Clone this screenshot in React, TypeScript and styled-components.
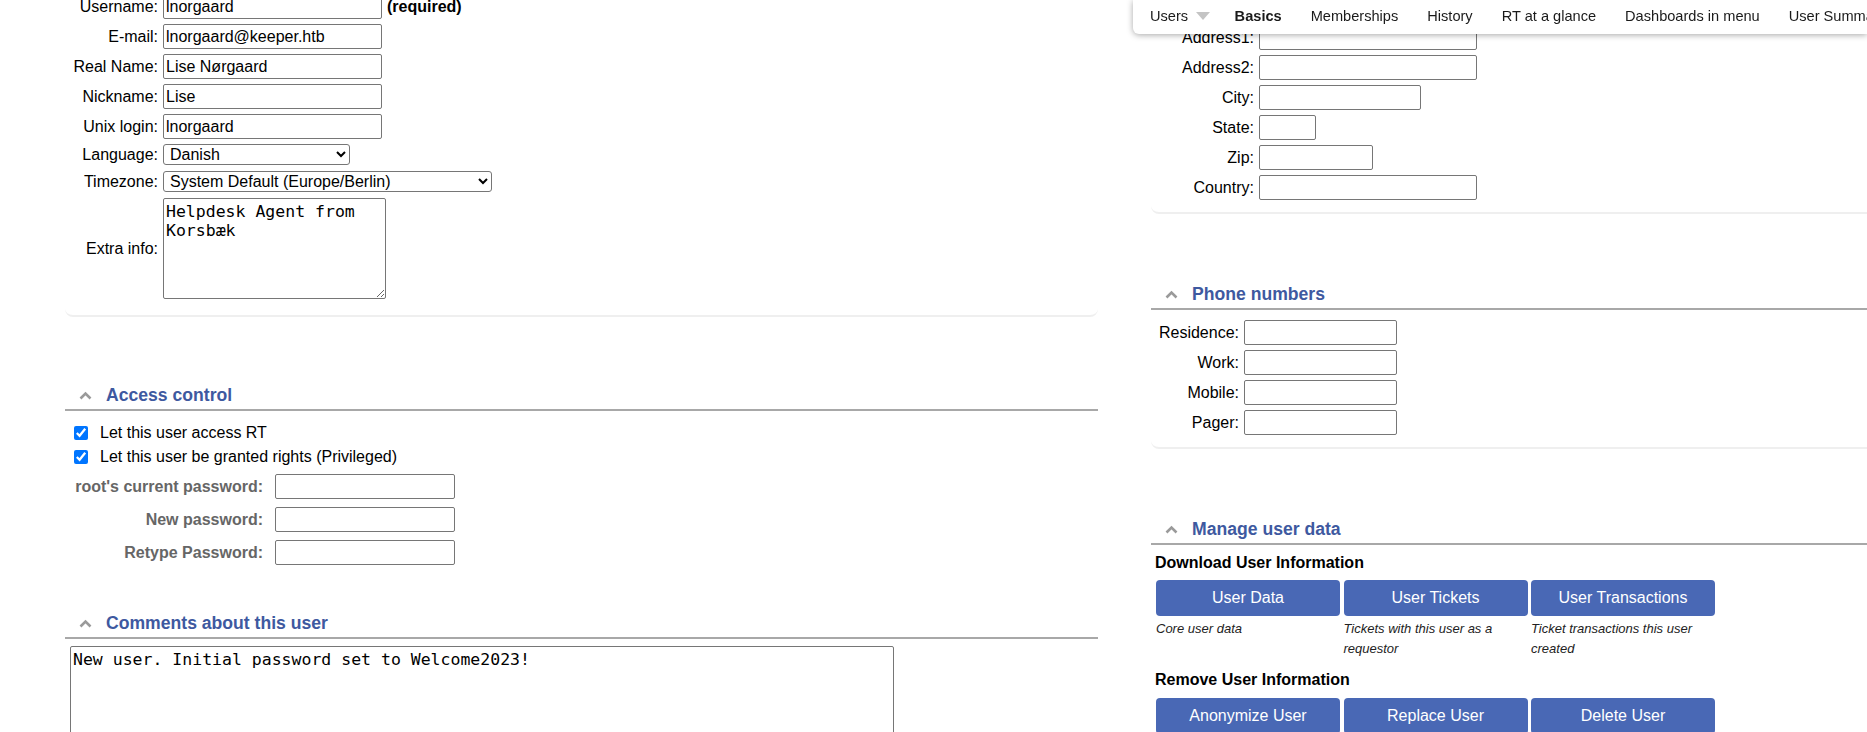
import React from 'react';
import styled, { createGlobalStyle, css } from 'styled-components';

const GlobalStyle = createGlobalStyle`
  html, body {
    margin: 0;
    padding: 0;
    overflow: hidden;
    background: #fff;
  }
  body {
    font-family: "Liberation Sans", Arial, sans-serif;
    font-size: 16px;
    color: #000;
  }
`;

const Page = styled.div`
  display: flex;
  align-items: flex-start;
  gap: 53px;
  width: max-content;
  padding-left: 65px;
  margin-top: -6px;
`;

const Column = styled.div`
  flex: none;
  width: 1033px;
`;

const Panel = styled.section<{ $gap?: number }>`
  margin-top: ${p => p.$gap ?? 0}px;
`;

const PanelHead = styled.div`
  display: flex;
  align-items: center;
  gap: 14px;
  height: 22px;
  padding: 0 0 3px 14px;
  border-bottom: 2px solid #a8a8a8;
`;

const PanelTitle = styled.h2`
  margin: 0;
  font-size: 17.6px;
  line-height: 22px;
  font-weight: bold;
  color: #3e59a0;
`;

const PanelBody = styled.div<{ $pt?: number; $pb?: number; $pl?: number; $framed?: boolean }>`
  padding: ${p => p.$pt ?? 0}px 0 ${p => p.$pb ?? 0}px ${p => p.$pl ?? 0}px;
  ${p =>
    p.$framed &&
    css`
      border-bottom: 2px solid #efefef;
      border-radius: 0 0 8px 8px;
    `}
`;

const FormGrid = styled.div<{ $label: number; $rowGap?: number; $labelGap?: number }>`
  display: grid;
  grid-template-columns: ${p => p.$label}px auto;
  row-gap: ${p => p.$rowGap ?? 5}px;
  align-items: center;
  justify-items: start;

  & > label {
    padding-right: ${p => p.$labelGap ?? 5}px;
  }
`;

const FieldLabel = styled.label<{ $muted?: boolean }>`
  justify-self: end;
  text-align: right;
  white-space: nowrap;
  ${p =>
    p.$muted &&
    css`
      font-weight: bold;
      color: #666;
    `}
`;

const FieldValue = styled.div`
  display: flex;
  align-items: center;
  gap: 5px;
`;

const TextInput = styled.input<{ $w: number }>`
  box-sizing: border-box;
  width: ${p => p.$w}px;
  height: 25px;
  margin: 0;
  padding: 1px 2px;
  border: 1px solid #767676;
  border-radius: 2px;
  background: #fff;
  color: #000;
  font: 16px "Liberation Sans", Arial, sans-serif;
`;

const Select = styled.select<{ $w: number }>`
  box-sizing: border-box;
  width: ${p => p.$w}px;
  height: 21px;
  margin: 0 0 1px;
  padding: 0 2px;
  border: 1px solid #767676;
  border-radius: 3px;
  background: #fff;
  color: #000;
  font: 16px "Liberation Sans", Arial, sans-serif;
`;

const TextArea = styled.textarea<{ $w: number; $h: number }>`
  display: block;
  box-sizing: border-box;
  width: ${p => p.$w}px;
  height: ${p => p.$h}px;
  margin: 0;
  padding: 3px 2px;
  border: 1px solid #767676;
  border-radius: 2px;
  color: #000;
  font: 16.5px "DejaVu Sans Mono", "Liberation Mono", monospace;
  line-height: 19px;
`;

const Required = styled.span`
  font-weight: bold;
`;

const CheckRow = styled.label`
  display: flex;
  align-items: center;
  gap: 12px;
  height: 24px;
  padding-left: 9px;
`;

const Check = styled.input.attrs({ type: 'checkbox' })`
  width: 14px;
  height: 14px;
  margin: 0;
  accent-color: #0075ff;
`;

const SubHeading = styled.div<{ $gap?: number }>`
  margin-top: ${p => p.$gap ?? 0}px;
  padding-left: 4px;
  font-weight: bold;
  line-height: 18px;
`;

const ButtonGrid = styled.div<{ $gap?: number }>`
  display: grid;
  grid-template-columns: repeat(3, 184px);
  column-gap: 3.5px;
  margin-top: ${p => p.$gap ?? 0}px;
  padding-left: 5px;
`;

const ActionButton = styled.button`
  height: 36px;
  border: none;
  border-radius: 4px;
  background: #4968b5;
  color: #fff;
  font: 16px "Liberation Sans", Arial, sans-serif;
  cursor: pointer;
`;

const Hint = styled.div`
  padding-top: 3px;
  font-size: 13px;
  font-style: italic;
  line-height: 20px;
  color: #222;
`;

const TopNav = styled.nav`
  position: fixed;
  top: 0;
  left: 1133px;
  right: 0;
  z-index: 10;
  display: flex;
  align-items: center;
  height: 34px;
  padding: 0 0 2px 2.5px;
  box-sizing: border-box;
  background: #fff;
  border-bottom-left-radius: 6px;
  box-shadow: 0 1px 6px rgba(0, 0, 0, 0.35);
  white-space: nowrap;
  overflow: hidden;
`;

const NavItem = styled.a<{ $active?: boolean }>`
  display: flex;
  align-items: center;
  gap: 8px;
  padding: 0 14.5px;
  font-size: 14.6px;
  font-weight: ${p => (p.$active ? 'bold' : 'normal')};
  color: #1a1a1a;
  text-decoration: none;
`;

const Caret = styled.svg`
  margin-right: -4.5px;
`;

const Chevron = () => (
  <svg width="13" height="9" viewBox="0 0 13 9">
    <polyline points="1.5,7.5 6.5,2.5 11.5,7.5" fill="none" stroke="#9a9a9a" strokeWidth="2.6" />
  </svg>
);

const Box = ({ title, gap, children }: { title: string; gap?: number; children: React.ReactNode }) => (
  <Panel $gap={gap}>
    <PanelHead>
      <Chevron />
      <PanelTitle>{title}</PanelTitle>
    </PanelHead>
    {children}
  </Panel>
);

const location: [string, number][] = [
  ['Address1', 218],
  ['Address2', 218],
  ['City', 162],
  ['State', 57],
  ['Zip', 114],
  ['Country', 218],
];

const phones = ['Residence', 'Work', 'Mobile', 'Pager'];

const passwords = ["root's current password", 'New password', 'Retype Password'];

const navItems = ['Basics', 'Memberships', 'History', 'RT at a glance', 'Dashboards in menu', 'User Summary'];

const App = () => (
  <>
    <GlobalStyle />
    <TopNav>
      <NavItem>
        Users
        <Caret width="14" height="8" viewBox="0 0 14 8">
          <polygon points="0,0 14,0 7,8" fill="#c4c4c4" />
        </Caret>
      </NavItem>
      {navItems.map(item => (
        <NavItem key={item} $active={item === 'Basics'}>
          {item}
        </NavItem>
      ))}
    </TopNav>

    <Page>
      <Column>
        <Panel>
          <PanelBody $pb={16} $framed>
            <FormGrid $label={98}>
              <FieldLabel>Username:</FieldLabel>
              <FieldValue>
                <TextInput $w={219} defaultValue="lnorgaard" />
                <Required>(required)</Required>
              </FieldValue>
              <FieldLabel>E-mail:</FieldLabel>
              <TextInput $w={219} defaultValue="lnorgaard@keeper.htb" />
              <FieldLabel>Real Name:</FieldLabel>
              <TextInput $w={219} defaultValue="Lise Nørgaard" />
              <FieldLabel>Nickname:</FieldLabel>
              <TextInput $w={219} defaultValue="Lise" />
              <FieldLabel>Unix login:</FieldLabel>
              <TextInput $w={219} defaultValue="lnorgaard" />
              <FieldLabel>Language:</FieldLabel>
              <Select $w={187} defaultValue="da">
                <option value="da">Danish</option>
              </Select>
              <FieldLabel>Timezone:</FieldLabel>
              <Select $w={329} defaultValue="sys">
                <option value="sys">System Default (Europe/Berlin)</option>
              </Select>
              <FieldLabel>Extra info:</FieldLabel>
              <TextArea $w={223} $h={101} defaultValue={'Helpdesk Agent from Korsbæk'} />
            </FormGrid>
          </PanelBody>
        </Panel>

        <Box title="Access control" gap={67}>
          <PanelBody $pt={10}>
            <CheckRow>
              <Check defaultChecked />
              Let this user access RT
            </CheckRow>
            <CheckRow>
              <Check defaultChecked />
              Let this user be granted rights (Privileged)
            </CheckRow>
            <PanelBody $pt={5}>
              <FormGrid $label={210} $labelGap={12} $rowGap={8}>
                {passwords.map(label => (
                  <React.Fragment key={label}>
                    <FieldLabel $muted>{label}:</FieldLabel>
                    <TextInput $w={180} type="password" />
                  </React.Fragment>
                ))}
              </FormGrid>
            </PanelBody>
          </PanelBody>
        </Box>

        <Box title="Comments about this user" gap={47}>
          <PanelBody $pt={7} $pl={5}>
            <TextArea $w={824} $h={180} defaultValue="New user. Initial password set to Welcome2023!" />
          </PanelBody>
        </Box>
      </Column>

      <Column>
        <Panel>
          <PanelBody $pt={31} $pb={12} $framed>
            <FormGrid $label={108}>
              {location.map(([label, width]) => (
                <React.Fragment key={label}>
                  <FieldLabel>{label}:</FieldLabel>
                  <TextInput $w={width} />
                </React.Fragment>
              ))}
            </FormGrid>
          </PanelBody>
        </Panel>

        <Box title="Phone numbers" gap={69}>
          <PanelBody $pt={10} $pb={12} $framed>
            <FormGrid $label={93}>
              {phones.map(label => (
                <React.Fragment key={label}>
                  <FieldLabel>{label}:</FieldLabel>
                  <TextInput $w={153} />
                </React.Fragment>
              ))}
            </FormGrid>
          </PanelBody>
        </Box>

        <Box title="Manage user data" gap={69}>
          <PanelBody $pt={9}>
            <SubHeading>Download User Information</SubHeading>
            <ButtonGrid $gap={8}>
              <ActionButton>User Data</ActionButton>
              <ActionButton>User Tickets</ActionButton>
              <ActionButton>User Transactions</ActionButton>
              <Hint>Core user data</Hint>
              <Hint>Tickets with this user as a requestor</Hint>
              <Hint>Ticket transactions this user created</Hint>
            </ButtonGrid>
            <SubHeading $gap={12}>Remove User Information</SubHeading>
            <ButtonGrid $gap={9}>
              <ActionButton>Anonymize User</ActionButton>
              <ActionButton>Replace User</ActionButton>
              <ActionButton>Delete User</ActionButton>
            </ButtonGrid>
          </PanelBody>
        </Box>
      </Column>
    </Page>
  </>
);

export default App;
